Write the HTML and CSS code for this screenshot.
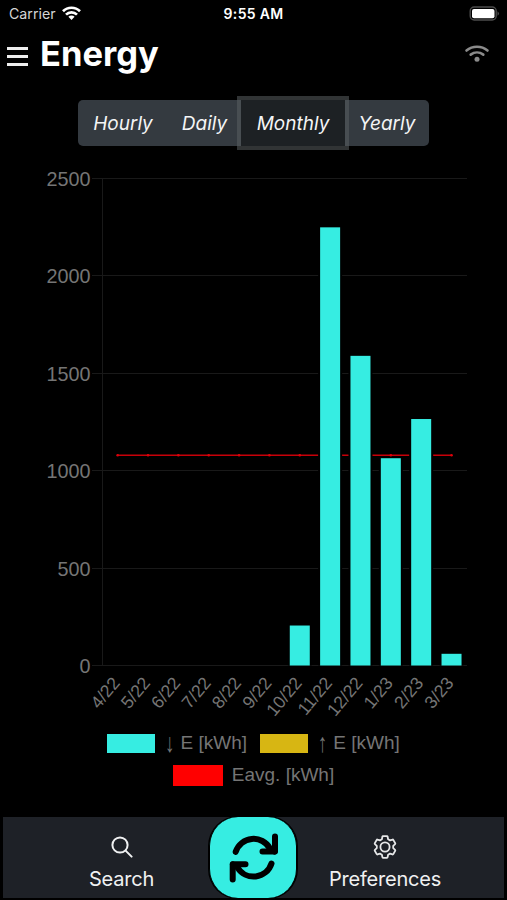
FILE: index.html
```
<!DOCTYPE html>
<html lang="en">
<head>
    <meta charset="UTF-8">
    <meta name="viewport" content="width=device-width, initial-scale=1.0">
    <title>Energy</title>
    <link rel="stylesheet" href="styles.css">
</head>
<body>
    <div class="main">
        <div class="status">
            <div class="carrier">
                <span>Carrier</span>
                <svg width="19" height="15" viewBox="0 0 19 15" fill="none" stroke="#fff" stroke-width="2.7">
                    <path d="M1 5.3a12 12 0 0 1 17 0"/>
                    <path d="M4 8.6a7.8 7.8 0 0 1 11 0"/>
                    <path d="M6.4 10.8a4.4 4.4 0 0 1 6.2 0L9.5 14z" fill="#fff" stroke="none"/>
                </svg>
            </div>
            <div class="time">9:55 AM</div>
            <svg class="battery" width="32" height="15" viewBox="0 0 32 15">
                <rect x="1.2" y="1" width="26" height="13" rx="4" fill="none" stroke="#4c4c4c" stroke-width="1.4"/>
                <rect x="3" y="2.9" width="22.5" height="9.3" rx="2" fill="#fff"/>
                <path d="M28.500 5.200q3 2.300 0 4.600z" fill="#4c4c4c"/>
            </svg>
        </div>

        <div class="header">
            <div class="menu"><span></span><span></span><span></span></div>
            <h1>Energy</h1>
            <svg class="wifi" width="26" height="20" viewBox="0 0 26 20" fill="none" stroke="#8b8b8b" stroke-width="2.6" stroke-linecap="round">
                <path d="M2.500 7.500a16.500 16.500 0 0 1 21 0"/>
                <path d="M6.700 11.600a10.500 10.500 0 0 1 12.600 0"/>
                <circle cx="13" cy="16.3" r="2.5" fill="#8b8b8b" stroke="none"/>
            </svg>
        </div>

        <div class="tabs">
            <button class="tab hourly">Hourly</button>
            <button class="tab daily">Daily</button>
            <button class="tab monthly active">Monthly</button>
            <button class="tab yearly">Yearly</button>
        </div>

        <svg class="chart" id="chart" width="507" height="565" viewBox="0 160 507 565"></svg>

        <div class="legend">
            <div class="row">
                <div class="item"><i class="box in"></i><span><b class="arrow">↓</b> E [kWh]</span></div>
                <div class="item"><i class="box out"></i><span><b class="arrow">↑</b> E [kWh]</span></div>
            </div>
            <div class="row">
                <div class="item"><i class="box avg"></i><span>Eavg. [kWh]</span></div>
            </div>
        </div>

        <div class="nav">
            <div class="link search">
                <svg width="22" height="22" viewBox="0 0 22 22" fill="none" stroke="#f0f1f2" stroke-width="2" stroke-linecap="round">
                    <circle cx="9" cy="9" r="7.6"/>
                    <path d="M14.6 14.6l6 6"/>
                </svg>
                <span>Search</span>
            </div>
            <div class="refresh">
                <svg width="50" height="50" viewBox="0 0 50 50" fill="none" stroke="#000" stroke-width="6" stroke-linecap="round" stroke-linejoin="round">
                    <path d="M7.700 18.800A18.800 18.800 0 0 1 42 15.500L46.500 18.500"/>
                    <path d="M47 3.500v15H34.500"/>
                    <path d="M43.500 30.500A18.800 18.800 0 0 1 9.500 34.500L5 31.500"/>
                    <path d="M4.700 46.500V31.300H17.500"/>
                </svg>
            </div>
            <div class="link prefs">
                <svg width="24" height="24" viewBox="0 0 24 24" fill="none" stroke="#e6e7e8" stroke-width="1.8" stroke-linejoin="round">
                    <path d="M10 1.200h4q.5 0 .6.600l.5 2.500 1.900 1.100 2.500-.8q.5-.2.800.3l1.900 3.300q.3.500-.1.900l-1.900 1.800v2.200l1.900 1.800q.4.400.1.900l-1.900 3.300q-.3.500-.8.300l-2.500-.8-1.900 1.100-.5 2.500q-.1.600-.6.600h-4q-.5 0-.6-.6l-.5-2.500-1.900-1.100-2.500.8q-.5.200-.8-.3l-1.900-3.300q-.3-.5.100-.9l1.900-1.800v-2.200l-1.900-1.800q-.4-.4-.1-.9l1.900-3.300q.3-.5.800-.3l2.500.8 1.900-1.100.5-2.500q.1-.6.600-.6z"/>
                    <circle cx="12" cy="12" r="4.600"/>
                </svg>
                <span>Preferences</span>
            </div>
        </div>
    </div>

    <script src="script.js"></script>
</body>
</html>
```
FILE: styles.css
```
*{
    padding: 0;
    margin: 0;
    box-sizing: border-box;
}
body{
    background: #000;
    font-family: Inter,"Liberation Sans",sans-serif;
    color: #fff;
}
.main{
    width: 507px;
    height: 900px;
    display: flex;
    flex-direction: column;
    overflow: hidden;
}
.status{
    height: 28px;
    display: grid;
    grid-template-columns: 1fr auto 1fr;
    align-items: center;
    padding: 0 6px 2px 9px;
    font-size: 14px;
}
.carrier{
    display: flex;
    align-items: center;
    gap: 6px;
    color: #d5d5d5;
    font-size: 14.2px;
}
.time{
    font-weight: 600;
    letter-spacing: 0.3px;
    margin-right: 3px;
}
.battery{
    justify-self: end;
}
.header{
    height: 70px;
    display: flex;
    align-items: flex-start;
    padding: 3px 17px 0 7px;
}
.menu{
    display: flex;
    flex-direction: column;
    gap: 5px;
    padding-top: 16px;
}
.menu span{
    width: 21px;
    height: 3px;
    background: #eee;
}
.header h1{
    margin-left: 12px;
    font-size: 34.5px;
    line-height: 46px;
    letter-spacing: 0;
}
.wifi{
    margin: 12px 0 0 auto;
}
.tabs{
    display: flex;
    align-items: center;
    height: 50px;
    margin-left: 78px;
}
.tab{
    height: 46px;
    border: none;
    background: #343a40;
    color: #f4f5f6;
    font: italic 19px Inter,"Liberation Sans",sans-serif;
}
.hourly{
    width: 90px;
    border-radius: 5px 0 0 5px;
}
.daily{
    width: 73px;
}
.yearly{
    width: 84px;
    border-radius: 0 5px 5px 0;
}
.active{
    width: 104px;
    background: #1d2124;
    box-shadow: 0 0 0 4px rgba(90,94,96,0.55);
    position: relative;
}
.chart{
    margin-top: 12px;
    flex: none;
    font-family: "Liberation Sans",Arial,sans-serif;
}
.grid{
    stroke: #191919;
    stroke-width: 1;
}
.tick{
    fill: #757575;
    font-size: 19.8px;
    text-anchor: end;
}
.month{
    fill: #757575;
    font-size: 17.6px;
    text-anchor: end;
}
.bar{
    fill: #36ede2;
}
.average{
    stroke: #c80009;
    stroke-width: 1.6;
}
.point{
    fill: #e0000a;
}
.legend{
    display: flex;
    flex-direction: column;
    padding-top: 2px;
    font-family: "Liberation Sans",Arial,sans-serif;
    font-size: 19px;
    color: #757575;
}
.row{
    display: flex;
    justify-content: center;
    gap: 13px;
    height: 32px;
}
.item{
    display: flex;
    align-items: center;
    gap: 9px;
    white-space: nowrap;
}
.arrow{
    display: inline-block;
    width: 11px;
    font-weight: normal;
    text-align: center;
    transform: translateY(1px) scaleY(1.4);
}
.box{
    width: 48px;
    height: 19px;
}
.in{
    background: #36ede2;
}
.out{
    background: #d7b613;
}
.avg{
    width: 50px;
    height: 21px;
    background: #f00;
}
.nav{
    display: grid;
    grid-template-columns: 206px 88px 1fr;
    height: 81px;
    margin: 26px 3px 0;
    background: #1e2127;
}
.link{
    display: flex;
    flex-direction: column;
    align-items: center;
    font-size: 20px;
    letter-spacing: -0.2px;
    color: #f0f1f2;
}
.search{
    padding: 19px 0 0 31px;
    gap: 9px;
}
.prefs{
    padding: 18px 31px 0 0;
    gap: 8px;
}
.refresh{
    display: flex;
    align-items: center;
    justify-content: center;
    border: 2px solid #000;
    border-width: 0 1px;
    border-radius: 29px;
    background: #36ede2;
    box-shadow: 0 0 0 1px #000;
}
```
FILE: script.js
```
const chart = document.getElementById("chart");
const months = ["4/22","5/22","6/22","7/22","8/22","9/22","10/22","11/22","12/22","1/23","2/23","3/23"];
const energy = [0,0,0,0,0,0,205,2247,1588,1063,1264,60];
const average = 1078;

const left = 102.5;
const step = 30.35;
const bottom = 665.5;
const getX = (i) => left + step * (i + 0.5);
const getY = (v) => bottom - v * 0.195;

let out = "";
for (let v = 0; v <= 2500; v += 500) {
    const y = Math.floor(getY(v)) + 0.5;
    out += `<path class="grid" d="M92 ${y}H467"/>`;
    out += `<text class="tick" x="90.5" y="${y + 7}">${v}</text>`;
}
out += `<path class="grid" d="M${left} 178V665"/>`;

out += `<path class="average" d="M${getX(0)} ${getY(average)}H${getX(11)}"/>`;
months.forEach((month, i) => {
    const x = getX(i);
    out += `<circle class="point" cx="${x}" cy="${getY(average)}" r="1.3"/>`;
    if (energy[i]) {
        // dark edge keeps the lines off the bar
        out += `<rect x="${x - 12}" y="${getY(energy[i]) - 1}" width="24" height="${energy[i] * 0.195 + 1}" fill="#000"/>`;
        out += `<rect class="bar" x="${x - 10}" y="${getY(energy[i])}" width="20" height="${energy[i] * 0.195}"/>`;
    }
    out += `<text class="month" transform="translate(${x + 3} 683.5) rotate(-50)">${month}</text>`;
});
chart.innerHTML = out;
```
